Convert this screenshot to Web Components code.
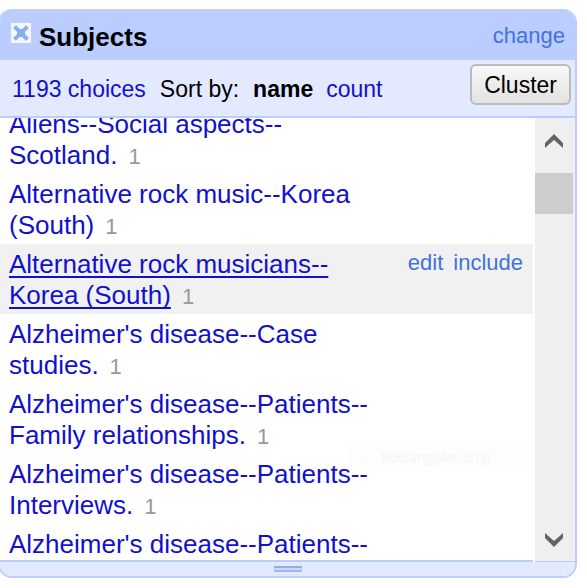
<!DOCTYPE html>
<html lang="en">
<head>
<meta charset="utf-8">
<title>Subjects facet</title>
<style>
  body {
    margin: 0; padding: 9px 10px 10px 0; box-sizing: border-box; height: 100vh;
    display: flex; background: #fff; position: relative; overflow: hidden;
    font-family: "Liberation Sans", Arial, sans-serif; color: #000;
    --frame: #bbccff; --tint: #e3e9ff; --link: #1111cc; --action: #4272db;
  }
</style>
</head>
<body>
<facet-panel>
  <facet-header slot="header">Subjects</facet-header>
  <facet-toolbar slot="toolbar" choices="1193"></facet-toolbar>
  <facet-choice count="1">Aliens--Social aspects--Scotland.</facet-choice>
  <facet-choice count="1">Alternative rock music--Korea (South)</facet-choice>
  <facet-choice count="1" active>Alternative rock musicians--Korea (South)</facet-choice>
  <facet-choice count="1">Alzheimer's disease--Case studies.</facet-choice>
  <facet-choice count="1">Alzheimer's disease--Patients--Family relationships.</facet-choice>
  <facet-choice count="1">Alzheimer's disease--Patients--Interviews.</facet-choice>
  <facet-choice>Alzheimer's disease--Patients--</facet-choice>
</facet-panel>
<snip-hint>Rectangular Snip</snip-hint>

<script>
  function define(name, render) {
    customElements.define(name, class extends HTMLElement {
      constructor() {
        super();
        this.attachShadow({ mode: "open" });
      }
      connectedCallback() {
        this.shadowRoot.innerHTML = render(this);
      }
    });
  }

  define("facet-panel", () => `
    <style>
      :host { flex: 1; min-width: 0; display: flex; flex-direction: column; margin-left: -2px;
        box-sizing: border-box; border: 2px solid var(--frame); border-top: 0;
        border-radius: 14px; overflow: hidden; background: #fff; }
      .body { flex: 1; min-height: 0; display: flex; }
      .list { flex: 1; min-width: 0; overflow: hidden; border-bottom: 2px solid var(--frame); }
      .rows { margin-top: -14px; }
      footer { height: 14px; background: var(--tint); display: flex; justify-content: center; align-items: center; }
      .grip { width: 28px; height: 2px; border-top: 2px solid #8caeea; border-bottom: 2px solid #9cb9f0; background: #c9d8fb; }
    </style>
    <slot name="header"></slot>
    <slot name="toolbar"></slot>
    <div class="body">
      <div class="list"><div class="rows"><slot></slot></div></div>
      <facet-scrollbar></facet-scrollbar>
    </div>
    <footer><div class="grip"></div></footer>`);

  define("facet-header", () => `
    <style>
      :host { display: flex; align-items: center; height: 51px; padding: 0 10px 0 11px; background: var(--frame); }
      button { border: 0; padding: 0; background: none; display: block; width: 20px; height: 20px; margin: 0 8px 4px 0; }
      svg { display: block; }
      h1 { flex: 1; margin: 4px 0 0; font-size: 26px; line-height: 30px; }
      a { margin-top: 2px; font-size: 22px; line-height: 26px; color: var(--action); text-decoration: none; }
    </style>
    <button aria-label="Remove this facet">
      <svg width="20" height="20" viewBox="0 0 20 20">
        <rect width="20" height="20" fill="#f4f7ff"/>
        <path d="M5 5l10 10M15 5L5 15" stroke="#8baeed" stroke-width="4" stroke-linecap="square"/>
        <path d="M6 6h8v8H6z" fill="#8baeed"/>
      </svg>
    </button>
    <h1><slot></slot></h1>
    <a href="#change">change</a>`);

  define("facet-toolbar", el => `
    <style>
      :host { display: flex; align-items: center; height: 56px; padding: 0 4px 0 12px;
        background: var(--tint); border-bottom: 2px solid var(--frame);
        font-size: 23px; line-height: 26px; white-space: nowrap; }
      a, .label, b { margin-top: 2px; }
      a { color: var(--link); text-decoration: none; }
      .label { margin-left: 14px; margin-right: 14px; }
      b { margin-right: 13px; }
      button { margin: 0 0 7px auto; box-sizing: border-box; height: 41px; padding: 0 12px;
        font: inherit; color: #000; border: 2px solid #bbb; border-radius: 6px;
        background: linear-gradient(#f8f8f8, #e2e2e2); }
    </style>
    <a href="#choices">${el.getAttribute("choices")} choices</a>
    <span class="label">Sort by:</span>
    <b>name</b>
    <a href="#count">count</a>
    <button>Cluster</button>`);

  define("facet-choice", el => {
    const count = el.getAttribute("count");
    const active = el.hasAttribute("active");
    return `
    <style>
      :host { display: grid; grid-template-columns: 1fr 138px; padding: 5px 10px 3px 9px; font-size: 26px; line-height: 31px; }
      :host([active]) { background: #f1f1f1; }
      a { color: var(--link); text-decoration: none; }
      :host([active]) .value { text-decoration: underline; text-decoration-thickness: 2px; text-underline-offset: 3px; text-decoration-skip-ink: none; }
      .count { margin-left: 11px; font-size: 22px; line-height: 22px; color: #999; }
      .actions { display: flex; justify-content: flex-end; gap: 10px; font-size: 22px; line-height: 28px; }
      .actions a { color: var(--action); }
    </style>
    <div><a class="value" href="#choice"><slot></slot></a>${count ? `<span class="count">${count}</span>` : ""}</div>
    ${active ? `<div class="actions"><a href="#edit">edit</a><a href="#include">include</a></div>` : ""}`;
  });

  define("facet-scrollbar", () => `
    <style>
      :host { flex: none; width: 40px; margin-left: 2px; display: flex; flex-direction: column; background: #efefef; border-bottom: 1px solid var(--frame); }
      button { border: 0; padding: 0; background: none; box-sizing: border-box; width: 38px; display: grid; place-items: center; }
      .up { height: 55px; padding-bottom: 10px; }
      .down { height: 43px; }
      .thumb { width: 38px; height: 41px; background: #cdcdcd; }
      .track { flex: 1; }
      path { fill: #646464; }
    </style>
    <button class="up" aria-label="Scroll up"><svg width="20" height="16"><path d="M10 1l9 9v5l-9-8-9 8v-5z"/></svg></button>
    <div class="thumb"></div>
    <div class="track"></div>
    <button class="down" aria-label="Scroll down"><svg width="20" height="16"><path d="M10 15l9-9V1l-9 8-9-8v5z"/></svg></button>`);

  define("snip-hint", () => `
    <style>
      :host { position: absolute; right: 38px; top: 444px; width: 202px; height: 24px; box-sizing: border-box; padding-left: 34px;
        background: rgba(220, 235, 250, .12); color: #f5f5f5; font: 14px/26px "Open Sans", sans-serif; pointer-events: none; }
    </style>
    <slot></slot>`);
</script>
</body>
</html>
